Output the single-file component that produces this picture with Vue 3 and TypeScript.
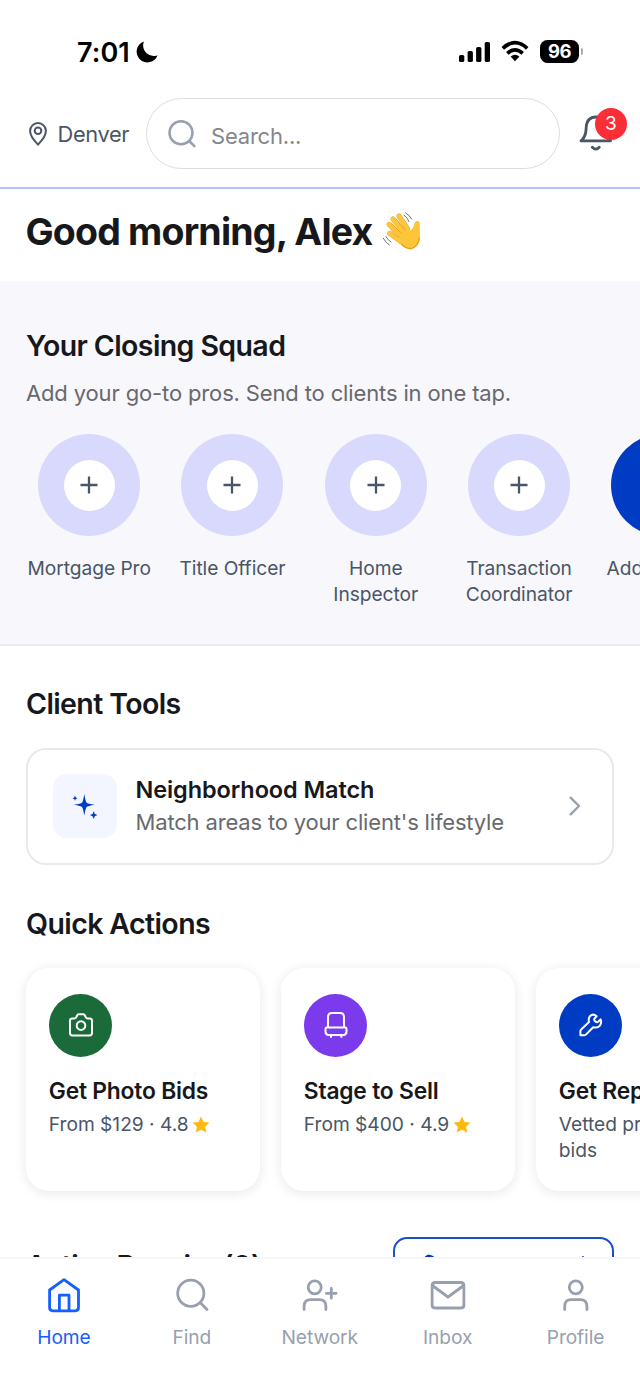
<script setup lang="ts">
interface QuickAction {
  title: string
  detail: string
  icon: 'camera' | 'chair' | 'wrench'
  rated: boolean
}

interface Tab {
  label: string
  icon: string
}

const squad: string[] = ['Mortgage Pro', 'Title Officer', 'Home Inspector', 'Transaction Coordinator']

const actions: QuickAction[] = [
  { title: 'Get Photo Bids', detail: 'From $129 · 4.8', icon: 'camera', rated: true },
  { title: 'Stage to Sell', detail: 'From $400 · 4.9', icon: 'chair', rated: true },
  { title: 'Get Repair Bids', detail: 'Vetted pros, fast bids', icon: 'wrench', rated: false },
]

const glyphs: Record<QuickAction['icon'], string> = {
  camera:
    'M4.2 6.4H6.6Q7.8 6.4 8.3 5.2L8.8 4Q9.4 2.2 10.8 2.2H15.2Q16.6 2.2 17.2 4L17.7 5.2Q18.2 6.4 19.4 6.4H21.6Q24 6.4 24 8.8V21Q24 23.4 21.6 23.4H4.4Q2 23.4 2 21V8.8Q2 6.4 4.2 6.4ZM17.3 13.6a4.3 4.3 0 1 1-8.6 0a4.3 4.3 0 1 1 8.6 0Z',
  chair:
    'M5 15.4V5.2Q5 1 9 1H17Q21 1 21 5.2V15.4M3.8 15.4H22.2Q23.5 15.4 23.5 16.8V19.6Q23.5 23 20.4 23H5.6Q2.5 23 2.5 19.6V16.8Q2.5 15.4 3.8 15.4ZM8 23V25.8M18.4 23V25.8',
  wrench:
    'M18.6 4.2C16.5 2.4 13.8 2.4 12.2 4C10.6 5.6 10.4 7.6 11 10L3.2 17.4Q2.4 18.2 2.4 19.2V23.2H6.4Q7.4 23.2 8.2 22.4L15.2 15.2C17.8 16 20.4 15.4 21.9 13.6C23.4 11.6 23.4 9.4 22.6 7.4L20.2 9.8Q18.9 10.8 17.4 9.5Q15.7 8 16.4 6.6Z',
}

const tabs: Tab[] = [
  { label: 'Home', icon: 'M20 4.6L34.5 15V32.6Q34.5 35.8 31.3 35.8H8.8Q5.6 35.8 5.6 32.6V15ZM15.4 35.5V20.2H25V35.5' },
  { label: 'Find', icon: 'M31.9 18.3a13.1 13.1 0 1 1-26.2 0a13.1 13.1 0 1 1 26.2 0ZM28.3 27.8L35 34.5' },
  {
    label: 'Network',
    icon: 'M22.2 12.3a6.5 6.5 0 1 1-13 0a6.5 6.5 0 1 1 13 0ZM5.1 34.6V31.5Q5.1 24.7 11.8 24.7H20.2Q26.9 24.7 26.9 31.5V34.6M32.3 13.4V23.2M27.4 18.3H37.2',
  },
  { label: 'Inbox', icon: 'M8.2 7.5H33.8Q36.9 7.5 36.9 10.6V29.9Q36.9 33 33.8 33H8.2Q5.1 33 5.1 29.9V10.6Q5.1 7.5 8.2 7.5ZM6 11L21 22L36 11' },
  {
    label: 'Profile',
    icon: 'M27.3 12.3a6.5 6.5 0 1 1-13 0a6.5 6.5 0 1 1 13 0ZM9.7 34.6V31.5Q9.7 24.7 16.4 24.7H25.2Q31.9 24.7 31.9 31.5V34.6',
  },
]
</script>

<template>
  <div class="phone">
    <div class="status">
      <span class="clock">7:01</span>
      <svg class="moon" viewBox="0 0 22 22"><path d="M7.8 .4A10.8 10.8 0 1 0 21.6 14.2Q15.5 16.6 10.6 12.2Q5.6 7 7.8 .4Z" /></svg>
      <svg class="signal" viewBox="0 0 32 20">
        <rect x="0" y="13" width="5.3" height="7" rx="1.6" />
        <rect x="8.6" y="9" width="5.3" height="11" rx="1.6" />
        <rect x="17.1" y="5" width="5.3" height="15" rx="1.6" />
        <rect x="25.7" y="0" width="5.3" height="20" rx="1.6" />
      </svg>
      <svg class="wifi" viewBox="0 0 28 21">
        <path class="arc" d="M1.8 7.3Q14-4 26.2 7.3M6.3 12.3Q14 5.6 21.7 12.3" />
        <path d="M9.6 15.6Q14 12 18.4 15.6L14 20.2Z" />
      </svg>
      <span class="battery">96</span><i class="nub"></i>
    </div>

    <header class="top">
      <svg class="pin" viewBox="0 0 18 24"><path d="M9 22.6Q1.1 14.5 1.1 9A7.9 7.9 0 0 1 16.9 9Q16.9 14.5 9 22.6Z" /><circle cx="9" cy="8.8" r="3.3" /></svg>
      <span class="city">Denver</span>
      <div class="search">
        <svg viewBox="0 0 28 28"><circle cx="13" cy="12.7" r="11.5" /><path d="M21.2 21L26.4 26.2" /></svg>
        <span>Search...</span>
      </div>
      <div class="alerts">
        <svg viewBox="0 0 34 38"><path d="M3 26.8H32.6C27.3 22.5 27 17 27 13.5C27 6.5 23.5 3 18 3C12.2 3 8.6 6.8 8.2 13.5C8 19 7.5 23.2 3 26.8Z" /><path d="M14.3 33.3Q17.8 36.8 21.3 33.3" /></svg>
        <b>3</b>
      </div>
    </header>

    <main class="feed">
      <h1 class="greeting">
        <span>Good morning, Alex</span>
        <svg class="wave" viewBox="36 30 120 120" role="img" aria-label="waving hand">
          <path class="motion" d="M102 42Q113 50 117 62M107 36Q119 42 125 54M40 112Q47 125 58 132M48 107Q53 117 63 123" />
          <path class="skin edge" d="M87 45L112 82M69 54L104 94M57 70L96 105M59 97L92 121" />
          <path class="palm" d="M92 86L120 88Q130 84 132 72Q134 61 142 60Q151 60 149 72L150 108Q147 137 127 144Q112 147 98 134L78 114Z" />
          <path class="skin" d="M87 45L112 84M69 54L104 96M57 70L96 107M59 97L92 123" />
          <path class="crease" d="M78 53L106 87M64 66L94 97M61 85L87 109" />
          <path class="shade" d="M94 130Q112 147 128 141Q145 134 148 111" />
        </svg>
      </h1>

      <section class="squad">
        <h2>Your Closing Squad</h2>
        <p class="lead">Add your go-to pros. Send to clients in one tap.</p>
        <div class="pros">
          <div v-for="role in squad" :key="role" class="pro">
            <div class="ring"><span class="add"><svg viewBox="0 0 20 20"><path d="M10 1.5V18.5M1.5 10H18.5" /></svg></span></div>
            <span class="role">{{ role }}</span>
          </div>
          <div class="pro">
            <div class="ring solid"></div>
            <span class="role">Add Custom</span>
          </div>
        </div>
      </section>

      <h2 class="tools-title">Client Tools</h2>
      <div class="match">
        <div class="tile">
          <svg viewBox="0 0 26 26"><path d="M12.3 1Q13.6 8.8 14.6 9.7Q15.5 10.6 22.9 11.8Q15.5 13 14.6 13.9Q13.6 14.8 12.3 22.6Q11 14.8 10 13.9Q9.1 13 1.7 11.8Q9.1 10.6 10 9.7Q11 8.8 12.3 1ZM3 2.6L3.8 4.4L5.6 5.2L3.8 6L3 7.8L2.2 6L.4 5.2L2.2 4.4ZM21.7 18.3L22.8 21L25.5 22.1L22.8 23.2L21.7 25.9L20.6 23.2L17.9 22.1L20.6 21Z" /></svg>
        </div>
        <div class="match-copy">
          <strong>Neighborhood Match</strong>
          <span>Match areas to your client's lifestyle</span>
        </div>
        <svg class="chevron" viewBox="0 0 12 20"><path d="M1.6 1.6L10 10L1.6 18.4" /></svg>
      </div>

      <h2 class="actions-title">Quick Actions</h2>
      <div class="actions">
        <article v-for="a in actions" :key="a.title" class="card">
          <div class="disc" :class="a.icon"><svg viewBox="0 0 26 26"><path :d="glyphs[a.icon]" /></svg></div>
          <strong>{{ a.title }}</strong>
          <p>{{ a.detail }}<svg v-if="a.rated" class="star" viewBox="0 0 18 18"><path d="M9 .4L11.5 5.9L17.5 6.6L13.1 10.7L14.3 16.6L9 13.7L3.7 16.6L4.9 10.7L.5 6.6L6.5 5.9Z" /></svg></p>
        </article>
      </div>

      <div class="repairs">
        <h2>Active Repairs (0)</h2>
        <div class="repair-button">
          <svg viewBox="0 0 26 26"><path :d="glyphs.wrench" /></svg>
          <svg class="small-plus" viewBox="0 0 20 20"><path d="M10 1.5V18.5M1.5 10H18.5" /></svg>
        </div>
      </div>
    </main>

    <nav class="tabs">
      <a v-for="(t, i) in tabs" :key="t.label" :class="{ active: i === 0 }">
        <svg viewBox="0 0 40 40"><path :d="t.icon" /></svg>
        <span>{{ t.label }}</span>
      </a>
    </nav>
  </div>
</template>

<style>
body {
  margin: 0;
}
</style>

<style scoped>
.phone {
  width: 640px;
  height: 1391px;
  overflow: hidden;
  display: flex;
  flex-direction: column;
  background: #fff;
  color: #17181b;
  font-family: Inter, "Liberation Sans", sans-serif;
}
svg {
  display: block;
  flex: none;
  overflow: visible;
}
h1,
h2,
p {
  margin: 0;
}
h2 {
  font-size: 28.5px;
  line-height: 34px;
  font-weight: 600;
  letter-spacing: -0.6px;
  white-space: nowrap;
}

/* status bar */
.status {
  box-sizing: border-box;
  height: 98px;
  padding: 5px 57px 0 77px;
  display: flex;
  align-items: center;
  flex: none;
  color: #000;
}
.clock {
  width: 58.5px;
  padding-top: 1px;
  font-size: 27px;
  font-weight: 600;
  letter-spacing: 0.1px;
}
.moon {
  width: 22px;
  height: 22px;
}
.signal {
  width: 32px;
  height: 20px;
  margin-left: auto;
}
.wifi {
  width: 28px;
  height: 21px;
  margin: 0 11px 0 10.5px;
}
.arc {
  fill: none;
  stroke: #000;
  stroke-width: 3.7;
}
.battery {
  width: 39px;
  height: 23px;
  border-radius: 7.5px;
  background: #000;
  color: #fff;
  font-size: 18.5px;
  line-height: 23px;
  font-weight: 700;
  text-align: center;
  letter-spacing: -0.4px;
}
.nub {
  width: 2px;
  height: 7px;
  margin-left: 2px;
  border-radius: 0 3px 3px 0;
  background: #aaa;
}

/* header */
.top {
  box-sizing: border-box;
  height: 91px;
  flex: none;
  display: flex;
  align-items: flex-start;
  padding: 0 12px 0 29px;
  border-bottom: 2px solid #adc5f8;
}
.pin {
  width: 18px;
  height: 24px;
  margin-top: 24px;
}
.pin path,
.pin circle {
  fill: none;
  stroke: #4a5666;
  stroke-width: 2;
}
.city {
  width: 88.5px;
  margin: 22px 0 0 10.5px;
  font-size: 21.8px;
  line-height: 28px;
  letter-spacing: -0.35px;
  color: #4a5666;
}
.search {
  box-sizing: border-box;
  width: 414px;
  height: 70.5px;
  border: 1.5px solid #dcdde2;
  border-radius: 36px;
  display: flex;
  align-items: center;
  padding: 5px 0 0 21.2px;
}
.search svg {
  width: 28px;
  height: 28px;
  margin-top: -4px;
}
.search svg * {
  fill: none;
  stroke: #989fae;
  stroke-width: 2.5;
  stroke-linecap: round;
}
.search span {
  margin-left: 14.8px;
  font-size: 22px;
  letter-spacing: -0.2px;
  color: #85868a;
}
.alerts {
  position: relative;
  margin: 16px 0 0 17.5px;
}
.alerts svg {
  width: 34px;
  height: 38px;
}
.alerts path {
  fill: none;
  stroke: #4a5666;
  stroke-width: 2.8;
  stroke-linecap: round;
  stroke-linejoin: round;
}
.alerts b {
  position: absolute;
  left: 17.4px;
  top: -6px;
  width: 32px;
  height: 32px;
  border-radius: 50%;
  background: #fb2d36;
  color: #fff;
  font-size: 19px;
  line-height: 32px;
  font-weight: 400;
  text-align: center;
}

/* feed */
.feed {
  flex: 1;
  min-height: 0;
  overflow: hidden;
}
.greeting {
  box-sizing: border-box;
  height: 92px;
  padding: 21px 25.5px 0;
  display: flex;
  align-items: flex-start;
  font-size: 37.5px;
  line-height: 44px;
  font-weight: 700;
  letter-spacing: -0.82px;
  white-space: nowrap;
}
.wave {
  width: 40px;
  height: 40px;
  margin: 0.5px 0 0 9.7px;
}
.wave path {
  stroke-linecap: round;
  stroke-linejoin: round;
}
.wave .motion {
  fill: none;
  stroke: #75777b;
  stroke-width: 3;
}
.skin {
  fill: none;
  stroke: #fdc63a;
  stroke-width: 13;
}
.edge {
  stroke: #eda51f;
  stroke-width: 15;
}
.palm {
  fill: #fdc63a;
}
.crease {
  fill: none;
  stroke: #e79a1c;
  stroke-width: 2;
}
.shade {
  fill: none;
  stroke: #ee9d16;
  stroke-width: 4;
}
.squad {
  box-sizing: border-box;
  height: 365px;
  padding: 47.5px 0 0 26px;
  background: #f7f7fc;
  border-bottom: 2px solid #ececef;
}
.lead {
  margin-top: 16.5px;
  font-size: 22px;
  line-height: 28px;
  letter-spacing: -0.14px;
  color: #68696e;
  white-space: nowrap;
}
.pros {
  display: flex;
  gap: 15.9px;
  margin: 27px 0 0 -0.5px;
}
.pro {
  width: 127.4px;
  flex: none;
  display: flex;
  flex-direction: column;
  align-items: center;
}
.ring {
  width: 102px;
  height: 102px;
  border-radius: 50%;
  background: #d9d9fe;
  display: flex;
  align-items: center;
  justify-content: center;
}
.solid {
  background: #003bc4;
}
.add {
  width: 51px;
  height: 51px;
  border-radius: 50%;
  background: #fff;
  display: flex;
  align-items: center;
  justify-content: center;
}
.add svg {
  width: 20px;
  height: 20px;
}
.add path {
  stroke: #4a5666;
  stroke-width: 2.3;
}
.role {
  margin-top: 20px;
  font-size: 19.2px;
  line-height: 25.5px;
  text-align: center;
  color: #4a5666;
  letter-spacing: -0.05px;
}
.tools-title {
  margin: 40.5px 0 27px 26px;
}
.match {
  box-sizing: border-box;
  width: 588px;
  height: 117px;
  margin-left: 26px;
  border: 2px solid #e9eaee;
  border-radius: 20px;
  padding: 0 31px 0 25px;
  display: flex;
  align-items: center;
}
.tile {
  width: 63.5px;
  height: 63.5px;
  border-radius: 14px;
  background: #f3f6ff;
  display: flex;
  align-items: center;
  justify-content: center;
}
.tile svg {
  width: 26px;
  height: 26px;
}
.tile path {
  fill: #003bc4;
}
.match-copy {
  flex: 1;
  margin-left: 19px;
  display: flex;
  flex-direction: column;
  white-space: nowrap;
}
.match-copy strong {
  font-size: 23.5px;
  line-height: 33px;
  font-weight: 600;
  letter-spacing: -0.1px;
}
.match-copy span {
  font-size: 22px;
  line-height: 33px;
  letter-spacing: -0.17px;
  color: #68696e;
}
.chevron {
  width: 12px;
  height: 20px;
}
.chevron path {
  fill: none;
  stroke: #989fae;
  stroke-width: 2.3;
  stroke-linecap: round;
  stroke-linejoin: round;
}
.actions-title {
  margin: 42px 0 27.5px 26px;
}
.actions {
  display: flex;
  gap: 21px;
  padding-left: 26px;
}
.card {
  box-sizing: border-box;
  width: 234px;
  height: 223px;
  flex: none;
  padding: 25.5px 22.8px 0;
  border-radius: 23px;
  background: #fff;
  box-shadow: 0 2px 12px rgba(20, 25, 45, 0.1);
}
.disc {
  width: 63.5px;
  height: 63.5px;
  border-radius: 50%;
  display: flex;
  align-items: center;
  justify-content: center;
}
.disc svg {
  width: 26px;
  height: 26px;
}
.disc path {
  fill: none;
  stroke: #fff;
  stroke-width: 2;
  stroke-linejoin: round;
}
.camera {
  background: #1b6b3a;
}
.chair {
  background: #7c3aed;
}
.wrench {
  background: #003bc4;
}
.card strong {
  display: block;
  margin-top: 17px;
  font-size: 22.8px;
  line-height: 34px;
  font-weight: 600;
  letter-spacing: -0.2px;
  white-space: nowrap;
}
.card p {
  margin-top: 4px;
  font-size: 19.2px;
  line-height: 25.5px;
  color: #4a5666;
  letter-spacing: -0.02px;
}
.star {
  display: inline-block;
  width: 18px;
  height: 18px;
  margin-left: 3.5px;
  vertical-align: -2.5px;
}
.star path {
  fill: #fdb913;
}
.repairs {
  display: flex;
  justify-content: space-between;
  padding: 46px 26px 0;
}
.repairs h2 {
  margin-top: 12px;
}
.repair-button {
  box-sizing: border-box;
  width: 221px;
  height: 56px;
  border: 2px solid #1a4ecb;
  border-radius: 14px;
  display: flex;
  justify-content: space-between;
  padding: 13.5px 21.5px 0 19px;
}
.repair-button svg {
  width: 26px;
  height: 26px;
}
.repair-button .small-plus {
  width: 16px;
  height: 16px;
  margin-top: 2.5px;
}
.repair-button path {
  fill: none;
  stroke: #003bc4;
  stroke-width: 2.4;
}

/* tab bar */
.tabs {
  box-sizing: border-box;
  height: 134px;
  flex: none;
  display: grid;
  grid-template-columns: repeat(5, 127.9px);
  border-top: 2px solid #f6f6f7;
  padding-top: 16px;
  background: #fff;
}
.tabs a {
  display: flex;
  flex-direction: column;
  align-items: center;
  color: #989fae;
}
.tabs svg {
  width: 40px;
  height: 40px;
  margin-left: -0.5px;
}
.tabs path {
  fill: none;
  stroke: currentColor;
  stroke-width: 2.8;
  stroke-linecap: round;
  stroke-linejoin: round;
}
.tabs span {
  margin-top: 9.5px;
  font-size: 19.2px;
  line-height: 25px;
  letter-spacing: -0.1px;
}
.tabs .active {
  color: #155eff;
}
</style>
